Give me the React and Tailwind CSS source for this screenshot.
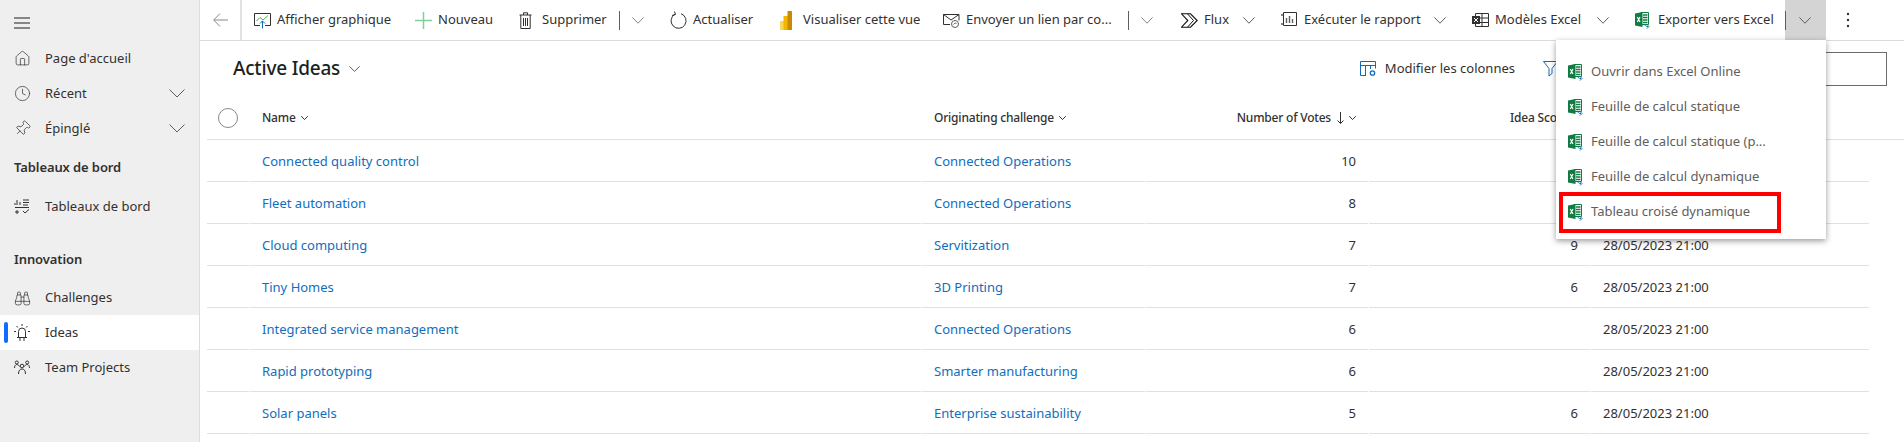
import { House, Clock, Pin, Binoculars } from 'lucide-react'

const FONT = "font-['Noto_Sans',sans-serif]"

function Chev({ className = 'w-[12px] h-[7px] text-[#605e5c]' }) {
  return (
    <svg viewBox="0 0 16 9" preserveAspectRatio="none" className={`shrink-0 ${className}`}>
      <path d="M.5.5 8 8l7.500-7.500" fill="none" stroke="currentColor" vectorEffect="non-scaling-stroke" />
    </svg>
  )
}

function ExcelIcon() {
  return (
    <svg width="16" height="18" viewBox="0 0 16 18" className="shrink-0">
      <path d="M6 1.500h7.500v12H6z" fill="#fff" stroke="#107c41" />
      <path d="M8 4h4.500M8 6.500h4.500M8 9h4.500M8 11.500h4.500" stroke="#107c41" strokeWidth="1.600" />
      <path d="M0 2.500 7.500 1v15L0 14.500z" fill="#107c41" />
      <path d="M2.300 6 5 11M5 6l-2.700 5" stroke="#fff" strokeWidth="1.200" />
      <path d="M10 13.500c0 1.500 1 2 3 2M12 13.500l2 2-2 2" fill="none" stroke="#0f6cbd" strokeWidth="1" />
    </svg>
  )
}

function ChartIcon() {
  return (
    <svg width="17" height="17" viewBox="0 0 17 17">
      <path d="M6 13.500H.5v-12h16v12H11" fill="none" stroke="#323130" />
      <path d="M2.500 9 6 5.500 9 8l5-4.500" fill="none" stroke="#4caf50" />
      <path d="M8.500 16.500V9M6 11.500 8.500 9l2.500 2.500" fill="none" stroke="#0f6cbd" />
    </svg>
  )
}

function PlusIcon() {
  return (
    <svg width="17" height="17" viewBox="0 0 17 17">
      <path d="M8.500 0v17M0 8.500h17" stroke="#7fcf9f" strokeWidth="1.500" />
    </svg>
  )
}

function TrashIcon() {
  return (
    <svg width="13" height="17" viewBox="0 0 13 17">
      <path d="M.5 3h12M4.500 3V.8h4V3M1.800 3v13.500h9.400V3M4.500 6v8M6.500 6v8M8.500 6v8" fill="none" stroke="#323130" />
    </svg>
  )
}

function RefreshIcon() {
  return (
    <svg width="17" height="18" viewBox="0 0 17 18">
      <path d="M11 2.700A7.500 7.500 0 1 1 5 3.200" fill="none" stroke="#323130" />
      <path d="M4.500.5 5.500 3.500 2 4.500" fill="none" stroke="#323130" />
    </svg>
  )
}

function PowerBiIcon() {
  return (
    <svg width="12" height="19" viewBox="0 0 12 19">
      <rect x="0" y="10" width="4.500" height="9" fill="#f9d65c" />
      <rect x="3.500" y="5" width="4.500" height="14" fill="#f2b600" />
      <rect x="7.500" y="0" width="4.500" height="19" rx="0.500" fill="#c98a00" />
    </svg>
  )
}

function MailIcon() {
  return (
    <svg width="17" height="16" viewBox="0 0 17 16">
      <path d="M7 12.500H.5v-10h15.500v6" fill="none" stroke="#323130" />
      <path d="M.5 2.500 8 8l8-5.500" fill="none" stroke="#323130" />
      <circle cx="12" cy="12" r="3.500" fill="none" stroke="#605e5c" />
      <path d="M10.500 12.500c1-1.500 2-1.500 3-1" fill="none" stroke="#605e5c" />
    </svg>
  )
}

function FlowIcon() {
  return (
    <svg width="17" height="15" viewBox="0 0 17 15">
      <path d="M.5.8h9l6.700 6.700-6.700 6.700h-9l6.300-6.700z" fill="none" stroke="#111" strokeWidth="1.100" />
      <path d="M6.500.8l6 6.700-6 6.700" fill="none" stroke="#111" strokeWidth="1" />
    </svg>
  )
}

function ReportIcon() {
  return (
    <svg width="16" height="16" viewBox="0 0 16 16">
      <path d="M2.500.5h13v13h-13z" fill="none" stroke="#323130" />
      <path d="M5.500 6v5M8.500 4v7M11.500 7v4M0 3h2M0 12h2" fill="none" stroke="#605e5c" strokeWidth="1.400" />
    </svg>
  )
}

function TemplateIcon() {
  return (
    <svg width="17" height="15" viewBox="0 0 17 15">
      <path d="M3.500.5h13v13h-13zM10 .5v13M3.500 5h13M3.500 9.500h13" fill="none" stroke="#323130" />
      <rect x="0" y="3" width="8" height="8" fill="#323130" />
      <path d="M2 5l4 4M6 5 2 9" stroke="#fff" />
    </svg>
  )
}

function ColumnsIcon() {
  return (
    <svg width="16" height="16" viewBox="0 0 16 16">
      <path d="M6 14.500H.5V.5h15v7M.5 4.500h15M5.500 4.500v10M10.500 4.500V8" fill="none" stroke="#0f6cbd" />
      <circle cx="12.500" cy="12" r="2.200" fill="none" stroke="#0f6cbd" strokeWidth="1.300" />
    </svg>
  )
}

function FilterIcon() {
  return (
    <svg width="15" height="16" viewBox="0 0 15 16">
      <path d="M.5.5h14L9 7.500v5L6 15V7.500z" fill="none" stroke="#0f6cbd" />
    </svg>
  )
}

function DashIcon() {
  return (
    <svg width="16" height="16" viewBox="0 0 16 16">
      <path d="M3 1v5M6 3v3M1 4v2M9 1h6M9 3.500h6M9 6h5M1 8.500h14M3 11v4M1 13h4M9 12l2 2 4-3.500" fill="none" stroke="#323130" />
    </svg>
  )
}

function IdeaIcon() {
  return (
    <svg width="16" height="18" viewBox="0 0 16 18">
      <path d="M4.500 13.500V7.500a3.500 3.500 0 0 1 7 0v6M3 13.500h10M6 13.500V17M10 13.500V17" fill="none" stroke="#323130" />
      <path d="M8 0v2M2.500 2l1.300 1.500M13.500 2l-1.300 1.500M0 7.500h2M14 7.500h2" stroke="#323130" />
    </svg>
  )
}

function TeamIcon() {
  return (
    <svg width="16" height="16" viewBox="0 0 16 16">
      <circle cx="8" cy="6" r="1.800" fill="none" stroke="#323130" />
      <path d="M4.500 14c0-3.500 1.500-5 3.500-5s3.500 1.500 3.500 5" fill="none" stroke="#323130" />
      <circle cx="2.800" cy="2.500" r="1.500" fill="none" stroke="#323130" />
      <circle cx="13.200" cy="2.500" r="1.500" fill="none" stroke="#323130" />
      <path d="M.5 8c0-2 1-3.500 2.300-3.500S5 5.500 5.500 6.500M15.500 8c0-2-1-3.500-2.300-3.500S11 5.500 10.500 6.500" fill="none" stroke="#323130" />
    </svg>
  )
}

function HamburgerIcon() {
  return (
    <svg width="16" height="12" viewBox="0 0 16 12">
      <path d="M0 1h16M0 6h16M0 11h16" stroke="#201f1e" />
    </svg>
  )
}

function BackIcon() {
  return (
    <svg width="15" height="14" viewBox="0 0 15 14">
      <path d="M15 7H1M7 .5.7 7 7 13.500" fill="none" stroke="#8a8886" />
    </svg>
  )
}

function ArrowDownIcon() {
  return (
    <svg width="7" height="12" viewBox="0 0 7 12" className="shrink-0">
      <path d="M3.500 0v11.500M.5 8.500l3 3 3-3" fill="none" stroke="#323130" />
    </svg>
  )
}

// one command bar button, width is fixed so the row stays where the reference has it
function Cmd({ icon, label, width, chevron }) {
  return (
    <div className={`flex items-center h-full pl-3 shrink-0 ${width} ${chevron ? 'pr-[14px] justify-between' : ''}`}>
      <div className="flex items-center">
        <span className="w-[23px] flex items-center shrink-0">{icon}</span>
        <span className="text-[13px] text-[#323130] whitespace-nowrap">{label}</span>
      </div>
      {chevron && <Chev />}
    </div>
  )
}

function Split() {
  return <span className="w-px h-[19px] bg-[#605e5c] shrink-0" />
}

function CommandBar() {
  return (
    <div className="flex items-center h-[41px] border-b border-[#dcdcdc] shrink-0">
      <div className="w-[42px] h-full flex items-center pl-[13px] border-r-2 border-[#e1e1e1] shrink-0">
        <BackIcon />
      </div>
      <Cmd width="w-[161px]" icon={<ChartIcon />} label="Afficher graphique" />
      <Cmd width="w-[104px]" icon={<PlusIcon />} label="Nouveau" />
      <Cmd width="w-[112px]" icon={<TrashIcon />} label="Supprimer" />
      <Split />
      <div className="w-[38px] pl-[12px] shrink-0"><Chev className="w-[12px] h-[7px] text-[#8a8886]" /></div>
      <Cmd width="w-[110px]" icon={<RefreshIcon />} label="Actualiser" />
      <Cmd width="w-[163px]" icon={<PowerBiIcon />} label="Visualiser cette vue" />
      <Cmd width="w-[197px]" icon={<MailIcon />} label="Envoyer un lien par co..." />
      <Split />
      <div className="w-[40px] pl-[12px] shrink-0"><Chev className="w-[12px] h-[7px] text-[#8a8886]" /></div>
      <Cmd width="w-[100px]" chevron icon={<FlowIcon />} label="Flux" />
      <Cmd width="w-[191px]" chevron icon={<ReportIcon />} label="Exécuter le rapport" />
      <Cmd width="w-[163px]" chevron icon={<TemplateIcon />} label="Modèles Excel" />
      <Cmd width="w-[162px]" icon={<ExcelIcon />} label="Exporter vers Excel" />
      <div className="w-[41px] h-full bg-[#d4d4d4] flex items-center shrink-0">
        <Split />
        <Chev className="ml-[13px] w-[12px] h-[7px] text-[#605e5c]" />
      </div>
      <div className="w-[44px] flex justify-center shrink-0">
        <svg width="4" height="16" viewBox="0 0 4 16">
          <circle cx="2" cy="2" r="1.200" fill="#323130" />
          <circle cx="2" cy="8" r="1.200" fill="#323130" />
          <circle cx="2" cy="14" r="1.200" fill="#323130" />
        </svg>
      </div>
    </div>
  )
}

function NavItem({ icon, label, chevron, active, spaced }) {
  return (
    <div className={`relative h-[35px] flex items-center pl-[14px] ${active ? 'bg-white' : ''} ${spaced || ''}`}>
      {active && <span className="absolute left-[4px] top-[7px] w-[4px] h-[21px] bg-[#0f6cff] rounded-sm" />}
      <span className="w-[31px] flex items-center shrink-0">{icon}</span>
      <span className="text-[13px] text-[#323130]">{label}</span>
      {chevron && <Chev className="ml-auto mr-[14px] w-[16px] h-[9px] text-[#605e5c]" />}
    </div>
  )
}

function NavGroup({ label, spaced }) {
  return (
    <div className={`h-[35px] flex items-center pl-[14px] text-[13px] tracking-[-0.1px] font-semibold text-[#323130] ${spaced}`}>
      {label}
    </div>
  )
}

function Sidebar() {
  const ic = 'w-[17px] h-[17px] text-[#323130]'
  return (
    <aside className="w-[200px] shrink-0 h-full bg-[#efefef] border-r border-[#dcdcdc]">
      <div className="h-[41px] pt-[4px] pl-[14px] flex items-center"><HamburgerIcon /></div>
      <NavItem icon={<House className={ic} strokeWidth={1} />} label="Page d'accueil" />
      <NavItem icon={<Clock className={ic} strokeWidth={1} />} label="Récent" chevron />
      <NavItem icon={<Pin className={`${ic} rotate-45`} strokeWidth={1} />} label="Épinglé" chevron />
      <NavGroup label="Tableaux de bord" spaced="mt-[4px]" />
      <NavItem icon={<DashIcon />} label="Tableaux de bord" spaced="mt-[4px]" />
      <NavGroup label="Innovation" spaced="mt-[18px]" />
      <NavItem icon={<Binoculars className={ic} strokeWidth={1} />} label="Challenges" spaced="mt-[3px] pt-px" />
      <NavItem icon={<IdeaIcon />} label="Ideas" active spaced="pt-px" />
      <NavItem icon={<TeamIcon />} label="Team Projects" spaced="pt-px" />
    </aside>
  )
}

const COLS = 'grid grid-cols-[42px_671px_223px_222px_221px_278px] gap-x-px w-[1662px]'
const LINK = 'text-[13px] text-[#106ebe]'
const VAL = 'text-[13px] text-[#323130]'

const ROWS = [
  ['Connected quality control', 'Connected Operations', '10', '', ''],
  ['Fleet automation', 'Connected Operations', '8', '', ''],
  ['Cloud computing', 'Servitization', '7', '9', '28/05/2023 21:00'],
  ['Tiny Homes', '3D Printing', '7', '6', '28/05/2023 21:00'],
  ['Integrated service management', 'Connected Operations', '6', '', '28/05/2023 21:00'],
  ['Rapid prototyping', 'Smarter manufacturing', '6', '', '28/05/2023 21:00'],
  ['Solar panels', 'Enterprise sustainability', '5', '6', '28/05/2023 21:00'],
]

function Grid() {
  const cell = 'h-[42px] flex items-center px-3 pt-[2px] border-b border-[#e0e0e0]'
  const head = 'flex items-center text-[12px] font-medium tracking-[-0.2px] text-[#323130] whitespace-nowrap'
  const sortChev = 'ml-[5px] w-[7px] h-[4px] text-[#323130]'
  return (
    <div className="pl-[7px]">
      <div className="h-[44px] border-b border-[#e0e0e0]">
        <div className={`${COLS} h-full items-center`}>
          <div className="pl-[11px]"><span className="block w-[20px] h-[20px] rounded-full border border-[#8a8886]" /></div>
          <div className={`${head} px-3`}>Name<Chev className={sortChev} /></div>
          <div className={`${head} px-3`}>Originating challenge<Chev className={sortChev} /></div>
          <div className={`${head} px-3 justify-end`}>
            Number of Votes
            <span className="ml-[6px]"><ArrowDownIcon /></span>
            <Chev className={sortChev} />
          </div>
          <div className={`${head} pl-[141px]`}>Idea Score</div>
          <div />
        </div>
      </div>
      {ROWS.map(r => (
        <div key={r[0]} className={COLS}>
          <div className={cell} />
          <div className={cell}><span className={LINK}>{r[0]}</span></div>
          <div className={cell}><span className={LINK}>{r[1]}</span></div>
          <div className={`${cell} justify-end`}><span className={VAL}>{r[2]}</span></div>
          <div className={`${cell} justify-end`}><span className={VAL}>{r[3]}</span></div>
          <div className={cell}><span className={VAL}>{r[4]}</span></div>
        </div>
      ))}
    </div>
  )
}

const MENU = ['Ouvrir dans Excel Online', 'Feuille de calcul statique', 'Feuille de calcul statique (p...', 'Feuille de calcul dynamique', 'Tableau croisé dynamique']

function ExportMenu() {
  return (
    <div className="absolute left-[1556px] top-[40px] w-[270px] h-[199px] bg-white shadow-[0_2px_6px_rgba(0,0,0,0.4)] pt-[14px] z-10">
      {MENU.map(m => (
        <div key={m} className="h-[35px] flex items-center pl-3">
          <span className="w-[23px] flex items-center shrink-0"><ExcelIcon /></span>
          <span className="text-[13px] text-[#605e5c] whitespace-nowrap">{m}</span>
        </div>
      ))}
      <div className="absolute left-[3px] top-[152px] w-[222px] h-[41px] border-4 border-[#ff0000]" />
    </div>
  )
}

export default function App() {
  return (
    <div className={`relative flex w-[1904px] h-[442px] overflow-hidden bg-white ${FONT}`}>
      <Sidebar />
      <main className="flex-1 min-w-0 flex flex-col">
        <CommandBar />
        <div className="h-[55px] flex items-center pl-[33px] pr-[17px] shrink-0">
          <span className="text-[19px] font-medium tracking-[-0.2px] text-[#201f1e]">Active Ideas</span>
          <Chev className="ml-[9px] w-[11px] h-[6px] text-[#605e5c]" />
          <div className="ml-auto mr-[28px] flex items-center gap-[9px]">
            <ColumnsIcon />
            <span className="text-[13px] text-[#323130]">Modifier les colonnes</span>
          </div>
          <div className="w-[144px] shrink-0"><FilterIcon /></div>
          <div className="w-[200px] h-[34px] border border-[#6b6b6b] shrink-0" />
        </div>
        <Grid />
      </main>
      <ExportMenu />
    </div>
  )
}
